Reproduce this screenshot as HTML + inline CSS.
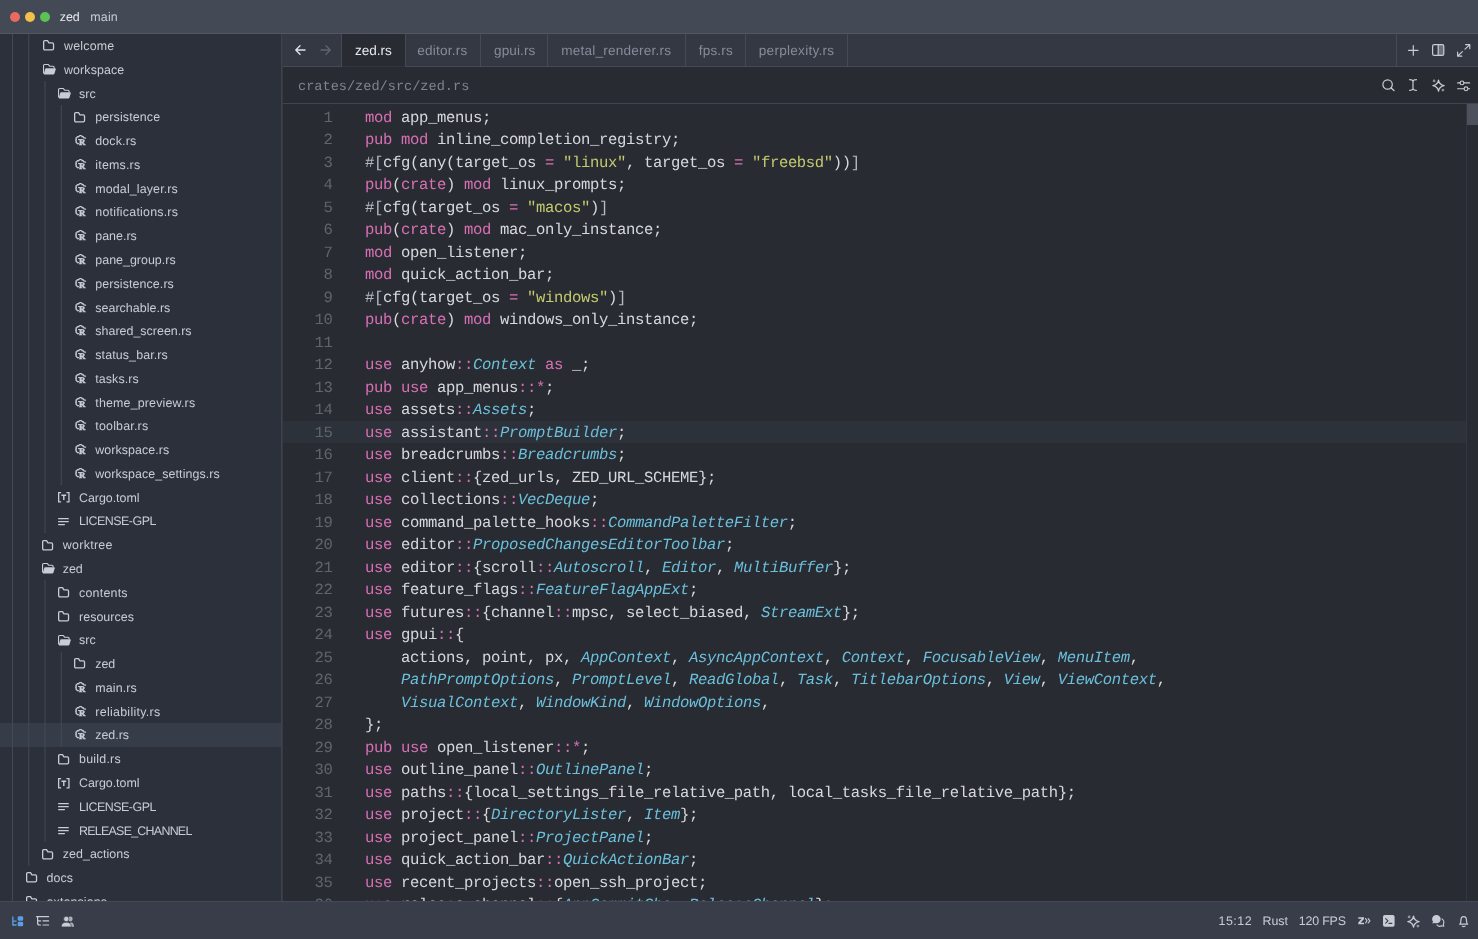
<!DOCTYPE html>
<html lang="en"><head><meta charset="utf-8"><title>zed — zed.rs</title>
<style>
*{box-sizing:border-box;margin:0;padding:0}
html,body{width:1478px;height:939px;overflow:hidden;background:#282c32}
body{position:relative;font-family:"Liberation Sans", sans-serif;font-size:12.43px;color:#c8ccd4;-webkit-font-smoothing:antialiased;text-rendering:geometricPrecision}
.tx,.cl,.ln,#crumb,.ict{will-change:opacity}
.ic{position:absolute;overflow:visible}
.tx{position:absolute;white-space:pre;color:#c8ccd4}
#title{position:absolute;left:0;top:0;width:1478px;height:34px;background:#434955;border-bottom:1px solid #505662}
.dot{position:absolute;top:11.5px;width:10px;height:10px;border-radius:50%}
#side{position:absolute;left:0;top:34px;width:283px;height:867px;background:#2b303a;border-right:1px solid #363a44;overflow:hidden}
#side:after{content:'';position:absolute;left:281px;top:0;width:1px;height:867px;background:#3d424d}
.sel{position:absolute;left:0;width:281px;background:#373c49}
.guide{position:absolute;width:1px;background:#444954}
#tabs{position:absolute;left:283px;top:34px;width:1195px;height:33px;background:#333843;border-bottom:1px solid #454a56}
.tab{position:absolute;top:0;height:32px;border-right:1px solid #454a56}
.tab.on{background:#282c32;height:33px;border-bottom:1px solid #30343c}
#tool{position:absolute;left:283px;top:67px;width:1195px;height:37px;background:#282c32;border-bottom:1px solid #3f444f}
#crumb{position:absolute;left:15px;top:11.4px;font-family:"Liberation Mono", monospace;font-size:13.6px;line-height:20px;color:#7d8391;white-space:pre}
#ed{position:absolute;left:283px;top:104px;width:1195px;height:797px;background:#282c32;overflow:hidden;font-family:"Liberation Mono", monospace;font-size:15.6px;letter-spacing:-0.3616px}
.ln{position:absolute;left:0;width:49.5px;text-align:right;color:#60646b;line-height:22.5px;height:22.5px}
.cl{position:absolute;left:82px;white-space:pre;color:#d6d8dc;line-height:22.5px;height:22.5px}
.k{color:#d96fb4}
.t{color:#6bbfdb;font-style:italic}
.s{color:#c3c96e}
.b{color:#b4b8c1}
.active{position:absolute;left:0;width:1183px;background:#2d313a}
#sbar{position:absolute;left:1183px;top:0;width:12px;height:797px;border-left:1px solid #32363e}
#thumb{position:absolute;left:0;top:0;width:12px;height:21px;background:#4c515c}
#status{position:absolute;left:0;top:901px;width:1478px;height:38px;background:#383d49;border-top:1px solid #444955}
</style></head><body>
<div id="title"><div class="dot" style="left:10px;background:#e96a60"></div><div class="dot" style="left:25px;background:#f1c14b"></div><div class="dot" style="left:40px;background:#5cc255"></div><div class="tx" style="left:59.80px;top:6.99px;font-size:12.43px;line-height:20px;color:#e6e8ec;letter-spacing:-0.120px;">zed</div><div class="tx" style="left:90.30px;top:6.99px;font-size:12.43px;line-height:20px;color:#c8ccd4;letter-spacing:0.176px;">main</div></div>
<div id="side">
<div class="sel" style="top:688.95px;height:23.77px"></div>
<div class="guide" style="left:12px;top:0.00px;height:867.00px;opacity:1.00"></div>
<div class="guide" style="left:28px;top:0.00px;height:831.56px;opacity:0.74"></div>
<div class="guide" style="left:29px;top:0.00px;height:831.56px;opacity:0.26"></div>
<div class="guide" style="left:44px;top:47.15px;height:451.63px;opacity:0.50"></div>
<div class="guide" style="left:45px;top:47.15px;height:451.63px;opacity:0.50"></div>
<div class="guide" style="left:60px;top:70.92px;height:380.32px;opacity:0.22"></div>
<div class="guide" style="left:61px;top:70.92px;height:380.32px;opacity:0.78"></div>
<div class="guide" style="left:44px;top:546.33px;height:261.47px;opacity:0.50"></div>
<div class="guide" style="left:45px;top:546.33px;height:261.47px;opacity:0.50"></div>
<div class="guide" style="left:60px;top:617.63px;height:95.08px;opacity:0.22"></div>
<div class="guide" style="left:61px;top:617.63px;height:95.08px;opacity:0.78"></div>
<svg class="ic" style="left:43.10px;top:6.45px" width="11.2" height="10.5" viewBox="0 0 11.2 10.5"><path d="M.65 1.9Q.65 .65 1.9 .65H4.5L5.9 2.9H9.3Q10.55 2.9 10.55 4.15V8.6Q10.55 9.85 9.3 9.85H1.9Q.65 9.85 .65 8.6Z" fill="none" stroke="#c8ccd4" stroke-width="1.3" stroke-linejoin="round"/></svg>
<div class="tx" style="left:64.00px;top:2.09px;font-size:12.43px;line-height:20px;letter-spacing:0.210px;">welcome</div>
<svg class="ic" style="left:42.80px;top:30.22px" width="13.2" height="10.5" viewBox="0 0 13.2 10.5"><path d="M.55 9.4V1.6Q.55 .55 1.6 .55H5.4L6.8 2.3H10.1Q11.1 2.3 11.1 3.3V4.3" fill="none" stroke="#c8ccd4" stroke-width="1.1" stroke-linejoin="round"/><path d="M3.1 4.2H12Q13.1 4.2 12.8 5.2L11.4 9.7Q11.15 10.5 10.3 10.5H1.5Q.6 10.5 .85 9.7L2.2 4.9Q2.4 4.2 3.1 4.2Z" fill="#c8ccd4"/></svg>
<div class="tx" style="left:64.00px;top:25.86px;font-size:12.43px;line-height:20px;letter-spacing:0.102px;">workspace</div>
<svg class="ic" style="left:57.80px;top:53.99px" width="13.2" height="10.5" viewBox="0 0 13.2 10.5"><path d="M.55 9.4V1.6Q.55 .55 1.6 .55H5.4L6.8 2.3H10.1Q11.1 2.3 11.1 3.3V4.3" fill="none" stroke="#c8ccd4" stroke-width="1.1" stroke-linejoin="round"/><path d="M3.1 4.2H12Q13.1 4.2 12.8 5.2L11.4 9.7Q11.15 10.5 10.3 10.5H1.5Q.6 10.5 .85 9.7L2.2 4.9Q2.4 4.2 3.1 4.2Z" fill="#c8ccd4"/></svg>
<div class="tx" style="left:79.00px;top:49.63px;font-size:12.43px;line-height:20px;letter-spacing:0.078px;">src</div>
<svg class="ic" style="left:74.40px;top:77.76px" width="11.2" height="10.5" viewBox="0 0 11.2 10.5"><path d="M.65 1.9Q.65 .65 1.9 .65H4.5L5.9 2.9H9.3Q10.55 2.9 10.55 4.15V8.6Q10.55 9.85 9.3 9.85H1.9Q.65 9.85 .65 8.6Z" fill="none" stroke="#c8ccd4" stroke-width="1.3" stroke-linejoin="round"/></svg>
<div class="tx" style="left:95.30px;top:73.40px;font-size:12.43px;line-height:20px;letter-spacing:0.124px;">persistence</div>
<svg class="ic ict" style="left:74.80px;top:101.13px" width="11" height="10.6" viewBox="0 0 11 10.6"><path d="M10.5 3.1L8.8 2.8Q8.5 1.1 7.3 1.9Q6.6 .1 5.5 .7Q4.3 .1 3.8 1.8Q2.3 1 1.9 2.6Q.3 2.9 1.4 4.2Q0 5.3 1.5 6Q.3 7.2 1.7 7.6Q2 9 3.4 8.7" fill="none" stroke="#c8ccd4" stroke-width="1.3" stroke-linecap="round" stroke-linejoin="round"/><path d="M3.1 4.55H5" fill="none" stroke="#c8ccd4" stroke-width="1.1"/><text x="3.9" y="10.35" font-weight="700" font-size="8.8" fill="#c8ccd4" stroke="#c8ccd4" stroke-width=".5" style="font-family:&quot;Liberation Serif&quot;,serif">R</text></svg>
<div class="tx" style="left:95.30px;top:97.17px;font-size:12.43px;line-height:20px;letter-spacing:0.129px;">dock.rs</div>
<svg class="ic ict" style="left:74.80px;top:124.90px" width="11" height="10.6" viewBox="0 0 11 10.6"><path d="M10.5 3.1L8.8 2.8Q8.5 1.1 7.3 1.9Q6.6 .1 5.5 .7Q4.3 .1 3.8 1.8Q2.3 1 1.9 2.6Q.3 2.9 1.4 4.2Q0 5.3 1.5 6Q.3 7.2 1.7 7.6Q2 9 3.4 8.7" fill="none" stroke="#c8ccd4" stroke-width="1.3" stroke-linecap="round" stroke-linejoin="round"/><path d="M3.1 4.55H5" fill="none" stroke="#c8ccd4" stroke-width="1.1"/><text x="3.9" y="10.35" font-weight="700" font-size="8.8" fill="#c8ccd4" stroke="#c8ccd4" stroke-width=".5" style="font-family:&quot;Liberation Serif&quot;,serif">R</text></svg>
<div class="tx" style="left:95.30px;top:120.94px;font-size:12.43px;line-height:20px;letter-spacing:0.197px;">items.rs</div>
<svg class="ic ict" style="left:74.80px;top:148.67px" width="11" height="10.6" viewBox="0 0 11 10.6"><path d="M10.5 3.1L8.8 2.8Q8.5 1.1 7.3 1.9Q6.6 .1 5.5 .7Q4.3 .1 3.8 1.8Q2.3 1 1.9 2.6Q.3 2.9 1.4 4.2Q0 5.3 1.5 6Q.3 7.2 1.7 7.6Q2 9 3.4 8.7" fill="none" stroke="#c8ccd4" stroke-width="1.3" stroke-linecap="round" stroke-linejoin="round"/><path d="M3.1 4.55H5" fill="none" stroke="#c8ccd4" stroke-width="1.1"/><text x="3.9" y="10.35" font-weight="700" font-size="8.8" fill="#c8ccd4" stroke="#c8ccd4" stroke-width=".5" style="font-family:&quot;Liberation Serif&quot;,serif">R</text></svg>
<div class="tx" style="left:95.30px;top:144.71px;font-size:12.43px;line-height:20px;letter-spacing:0.132px;">modal_layer.rs</div>
<svg class="ic ict" style="left:74.80px;top:172.44px" width="11" height="10.6" viewBox="0 0 11 10.6"><path d="M10.5 3.1L8.8 2.8Q8.5 1.1 7.3 1.9Q6.6 .1 5.5 .7Q4.3 .1 3.8 1.8Q2.3 1 1.9 2.6Q.3 2.9 1.4 4.2Q0 5.3 1.5 6Q.3 7.2 1.7 7.6Q2 9 3.4 8.7" fill="none" stroke="#c8ccd4" stroke-width="1.3" stroke-linecap="round" stroke-linejoin="round"/><path d="M3.1 4.55H5" fill="none" stroke="#c8ccd4" stroke-width="1.1"/><text x="3.9" y="10.35" font-weight="700" font-size="8.8" fill="#c8ccd4" stroke="#c8ccd4" stroke-width=".5" style="font-family:&quot;Liberation Serif&quot;,serif">R</text></svg>
<div class="tx" style="left:95.30px;top:168.48px;font-size:12.43px;line-height:20px;letter-spacing:0.216px;">notifications.rs</div>
<svg class="ic ict" style="left:74.80px;top:196.21px" width="11" height="10.6" viewBox="0 0 11 10.6"><path d="M10.5 3.1L8.8 2.8Q8.5 1.1 7.3 1.9Q6.6 .1 5.5 .7Q4.3 .1 3.8 1.8Q2.3 1 1.9 2.6Q.3 2.9 1.4 4.2Q0 5.3 1.5 6Q.3 7.2 1.7 7.6Q2 9 3.4 8.7" fill="none" stroke="#c8ccd4" stroke-width="1.3" stroke-linecap="round" stroke-linejoin="round"/><path d="M3.1 4.55H5" fill="none" stroke="#c8ccd4" stroke-width="1.1"/><text x="3.9" y="10.35" font-weight="700" font-size="8.8" fill="#c8ccd4" stroke="#c8ccd4" stroke-width=".5" style="font-family:&quot;Liberation Serif&quot;,serif">R</text></svg>
<div class="tx" style="left:95.30px;top:192.25px;font-size:12.43px;line-height:20px;letter-spacing:0.002px;">pane.rs</div>
<svg class="ic ict" style="left:74.80px;top:219.98px" width="11" height="10.6" viewBox="0 0 11 10.6"><path d="M10.5 3.1L8.8 2.8Q8.5 1.1 7.3 1.9Q6.6 .1 5.5 .7Q4.3 .1 3.8 1.8Q2.3 1 1.9 2.6Q.3 2.9 1.4 4.2Q0 5.3 1.5 6Q.3 7.2 1.7 7.6Q2 9 3.4 8.7" fill="none" stroke="#c8ccd4" stroke-width="1.3" stroke-linecap="round" stroke-linejoin="round"/><path d="M3.1 4.55H5" fill="none" stroke="#c8ccd4" stroke-width="1.1"/><text x="3.9" y="10.35" font-weight="700" font-size="8.8" fill="#c8ccd4" stroke="#c8ccd4" stroke-width=".5" style="font-family:&quot;Liberation Serif&quot;,serif">R</text></svg>
<div class="tx" style="left:95.30px;top:216.02px;font-size:12.43px;line-height:20px;letter-spacing:0.019px;">pane_group.rs</div>
<svg class="ic ict" style="left:74.80px;top:243.75px" width="11" height="10.6" viewBox="0 0 11 10.6"><path d="M10.5 3.1L8.8 2.8Q8.5 1.1 7.3 1.9Q6.6 .1 5.5 .7Q4.3 .1 3.8 1.8Q2.3 1 1.9 2.6Q.3 2.9 1.4 4.2Q0 5.3 1.5 6Q.3 7.2 1.7 7.6Q2 9 3.4 8.7" fill="none" stroke="#c8ccd4" stroke-width="1.3" stroke-linecap="round" stroke-linejoin="round"/><path d="M3.1 4.55H5" fill="none" stroke="#c8ccd4" stroke-width="1.1"/><text x="3.9" y="10.35" font-weight="700" font-size="8.8" fill="#c8ccd4" stroke="#c8ccd4" stroke-width=".5" style="font-family:&quot;Liberation Serif&quot;,serif">R</text></svg>
<div class="tx" style="left:95.30px;top:239.79px;font-size:12.43px;line-height:20px;letter-spacing:0.093px;">persistence.rs</div>
<svg class="ic ict" style="left:74.80px;top:267.52px" width="11" height="10.6" viewBox="0 0 11 10.6"><path d="M10.5 3.1L8.8 2.8Q8.5 1.1 7.3 1.9Q6.6 .1 5.5 .7Q4.3 .1 3.8 1.8Q2.3 1 1.9 2.6Q.3 2.9 1.4 4.2Q0 5.3 1.5 6Q.3 7.2 1.7 7.6Q2 9 3.4 8.7" fill="none" stroke="#c8ccd4" stroke-width="1.3" stroke-linecap="round" stroke-linejoin="round"/><path d="M3.1 4.55H5" fill="none" stroke="#c8ccd4" stroke-width="1.1"/><text x="3.9" y="10.35" font-weight="700" font-size="8.8" fill="#c8ccd4" stroke="#c8ccd4" stroke-width=".5" style="font-family:&quot;Liberation Serif&quot;,serif">R</text></svg>
<div class="tx" style="left:95.30px;top:263.56px;font-size:12.43px;line-height:20px;letter-spacing:0.038px;">searchable.rs</div>
<svg class="ic ict" style="left:74.80px;top:291.29px" width="11" height="10.6" viewBox="0 0 11 10.6"><path d="M10.5 3.1L8.8 2.8Q8.5 1.1 7.3 1.9Q6.6 .1 5.5 .7Q4.3 .1 3.8 1.8Q2.3 1 1.9 2.6Q.3 2.9 1.4 4.2Q0 5.3 1.5 6Q.3 7.2 1.7 7.6Q2 9 3.4 8.7" fill="none" stroke="#c8ccd4" stroke-width="1.3" stroke-linecap="round" stroke-linejoin="round"/><path d="M3.1 4.55H5" fill="none" stroke="#c8ccd4" stroke-width="1.1"/><text x="3.9" y="10.35" font-weight="700" font-size="8.8" fill="#c8ccd4" stroke="#c8ccd4" stroke-width=".5" style="font-family:&quot;Liberation Serif&quot;,serif">R</text></svg>
<div class="tx" style="left:95.30px;top:287.33px;font-size:12.43px;line-height:20px;letter-spacing:0.021px;">shared_screen.rs</div>
<svg class="ic ict" style="left:74.80px;top:315.06px" width="11" height="10.6" viewBox="0 0 11 10.6"><path d="M10.5 3.1L8.8 2.8Q8.5 1.1 7.3 1.9Q6.6 .1 5.5 .7Q4.3 .1 3.8 1.8Q2.3 1 1.9 2.6Q.3 2.9 1.4 4.2Q0 5.3 1.5 6Q.3 7.2 1.7 7.6Q2 9 3.4 8.7" fill="none" stroke="#c8ccd4" stroke-width="1.3" stroke-linecap="round" stroke-linejoin="round"/><path d="M3.1 4.55H5" fill="none" stroke="#c8ccd4" stroke-width="1.1"/><text x="3.9" y="10.35" font-weight="700" font-size="8.8" fill="#c8ccd4" stroke="#c8ccd4" stroke-width=".5" style="font-family:&quot;Liberation Serif&quot;,serif">R</text></svg>
<div class="tx" style="left:95.30px;top:311.10px;font-size:12.43px;line-height:20px;letter-spacing:0.113px;">status_bar.rs</div>
<svg class="ic ict" style="left:74.80px;top:338.83px" width="11" height="10.6" viewBox="0 0 11 10.6"><path d="M10.5 3.1L8.8 2.8Q8.5 1.1 7.3 1.9Q6.6 .1 5.5 .7Q4.3 .1 3.8 1.8Q2.3 1 1.9 2.6Q.3 2.9 1.4 4.2Q0 5.3 1.5 6Q.3 7.2 1.7 7.6Q2 9 3.4 8.7" fill="none" stroke="#c8ccd4" stroke-width="1.3" stroke-linecap="round" stroke-linejoin="round"/><path d="M3.1 4.55H5" fill="none" stroke="#c8ccd4" stroke-width="1.1"/><text x="3.9" y="10.35" font-weight="700" font-size="8.8" fill="#c8ccd4" stroke="#c8ccd4" stroke-width=".5" style="font-family:&quot;Liberation Serif&quot;,serif">R</text></svg>
<div class="tx" style="left:95.30px;top:334.87px;font-size:12.43px;line-height:20px;letter-spacing:0.082px;">tasks.rs</div>
<svg class="ic ict" style="left:74.80px;top:362.60px" width="11" height="10.6" viewBox="0 0 11 10.6"><path d="M10.5 3.1L8.8 2.8Q8.5 1.1 7.3 1.9Q6.6 .1 5.5 .7Q4.3 .1 3.8 1.8Q2.3 1 1.9 2.6Q.3 2.9 1.4 4.2Q0 5.3 1.5 6Q.3 7.2 1.7 7.6Q2 9 3.4 8.7" fill="none" stroke="#c8ccd4" stroke-width="1.3" stroke-linecap="round" stroke-linejoin="round"/><path d="M3.1 4.55H5" fill="none" stroke="#c8ccd4" stroke-width="1.1"/><text x="3.9" y="10.35" font-weight="700" font-size="8.8" fill="#c8ccd4" stroke="#c8ccd4" stroke-width=".5" style="font-family:&quot;Liberation Serif&quot;,serif">R</text></svg>
<div class="tx" style="left:95.30px;top:358.64px;font-size:12.43px;line-height:20px;letter-spacing:0.164px;">theme_preview.rs</div>
<svg class="ic ict" style="left:74.80px;top:386.37px" width="11" height="10.6" viewBox="0 0 11 10.6"><path d="M10.5 3.1L8.8 2.8Q8.5 1.1 7.3 1.9Q6.6 .1 5.5 .7Q4.3 .1 3.8 1.8Q2.3 1 1.9 2.6Q.3 2.9 1.4 4.2Q0 5.3 1.5 6Q.3 7.2 1.7 7.6Q2 9 3.4 8.7" fill="none" stroke="#c8ccd4" stroke-width="1.3" stroke-linecap="round" stroke-linejoin="round"/><path d="M3.1 4.55H5" fill="none" stroke="#c8ccd4" stroke-width="1.1"/><text x="3.9" y="10.35" font-weight="700" font-size="8.8" fill="#c8ccd4" stroke="#c8ccd4" stroke-width=".5" style="font-family:&quot;Liberation Serif&quot;,serif">R</text></svg>
<div class="tx" style="left:95.30px;top:382.41px;font-size:12.43px;line-height:20px;letter-spacing:0.189px;">toolbar.rs</div>
<svg class="ic ict" style="left:74.80px;top:410.14px" width="11" height="10.6" viewBox="0 0 11 10.6"><path d="M10.5 3.1L8.8 2.8Q8.5 1.1 7.3 1.9Q6.6 .1 5.5 .7Q4.3 .1 3.8 1.8Q2.3 1 1.9 2.6Q.3 2.9 1.4 4.2Q0 5.3 1.5 6Q.3 7.2 1.7 7.6Q2 9 3.4 8.7" fill="none" stroke="#c8ccd4" stroke-width="1.3" stroke-linecap="round" stroke-linejoin="round"/><path d="M3.1 4.55H5" fill="none" stroke="#c8ccd4" stroke-width="1.1"/><text x="3.9" y="10.35" font-weight="700" font-size="8.8" fill="#c8ccd4" stroke="#c8ccd4" stroke-width=".5" style="font-family:&quot;Liberation Serif&quot;,serif">R</text></svg>
<div class="tx" style="left:95.30px;top:406.18px;font-size:12.43px;line-height:20px;letter-spacing:0.072px;">workspace.rs</div>
<svg class="ic ict" style="left:74.80px;top:433.91px" width="11" height="10.6" viewBox="0 0 11 10.6"><path d="M10.5 3.1L8.8 2.8Q8.5 1.1 7.3 1.9Q6.6 .1 5.5 .7Q4.3 .1 3.8 1.8Q2.3 1 1.9 2.6Q.3 2.9 1.4 4.2Q0 5.3 1.5 6Q.3 7.2 1.7 7.6Q2 9 3.4 8.7" fill="none" stroke="#c8ccd4" stroke-width="1.3" stroke-linecap="round" stroke-linejoin="round"/><path d="M3.1 4.55H5" fill="none" stroke="#c8ccd4" stroke-width="1.1"/><text x="3.9" y="10.35" font-weight="700" font-size="8.8" fill="#c8ccd4" stroke="#c8ccd4" stroke-width=".5" style="font-family:&quot;Liberation Serif&quot;,serif">R</text></svg>
<div class="tx" style="left:95.30px;top:429.95px;font-size:12.43px;line-height:20px;letter-spacing:0.074px;">workspace_settings.rs</div>
<svg class="ic" style="left:57.80px;top:458.43px" width="11.6" height="10.6" viewBox="0 0 11.6 10.6"><path d="M3.1 .65H.65V9.95H3.1M8.5 .65H10.95V9.95H8.5" fill="none" stroke="#c8ccd4" stroke-width="1.3"/><path d="M3.4 3.2H8.2M5.8 3.2V7.9" fill="none" stroke="#c8ccd4" stroke-width="1.45"/></svg>
<div class="tx" style="left:79.00px;top:453.72px;font-size:12.43px;line-height:20px;letter-spacing:-0.027px;">Cargo.toml</div>
<svg class="ic" style="left:58.10px;top:483.90px" width="11.5" height="7.4" viewBox="0 0 11.5 7.4"><path d="M.65 .7H10.25M.65 3.65H10.25M.65 6.6H6.4" fill="none" stroke="#c8ccd4" stroke-width="1.3" stroke-linecap="round"/></svg>
<div class="tx" style="left:79.00px;top:477.49px;font-size:12.43px;line-height:20px;letter-spacing:-0.476px;">LICENSE-GPL</div>
<svg class="ic" style="left:41.90px;top:505.62px" width="11.2" height="10.5" viewBox="0 0 11.2 10.5"><path d="M.65 1.9Q.65 .65 1.9 .65H4.5L5.9 2.9H9.3Q10.55 2.9 10.55 4.15V8.6Q10.55 9.85 9.3 9.85H1.9Q.65 9.85 .65 8.6Z" fill="none" stroke="#c8ccd4" stroke-width="1.3" stroke-linejoin="round"/></svg>
<div class="tx" style="left:62.80px;top:501.26px;font-size:12.43px;line-height:20px;letter-spacing:0.285px;">worktree</div>
<svg class="ic" style="left:41.60px;top:529.39px" width="13.2" height="10.5" viewBox="0 0 13.2 10.5"><path d="M.55 9.4V1.6Q.55 .55 1.6 .55H5.4L6.8 2.3H10.1Q11.1 2.3 11.1 3.3V4.3" fill="none" stroke="#c8ccd4" stroke-width="1.1" stroke-linejoin="round"/><path d="M3.1 4.2H12Q13.1 4.2 12.8 5.2L11.4 9.7Q11.15 10.5 10.3 10.5H1.5Q.6 10.5 .85 9.7L2.2 4.9Q2.4 4.2 3.1 4.2Z" fill="#c8ccd4"/></svg>
<div class="tx" style="left:62.80px;top:525.03px;font-size:12.43px;line-height:20px;letter-spacing:-0.120px;">zed</div>
<svg class="ic" style="left:58.10px;top:553.16px" width="11.2" height="10.5" viewBox="0 0 11.2 10.5"><path d="M.65 1.9Q.65 .65 1.9 .65H4.5L5.9 2.9H9.3Q10.55 2.9 10.55 4.15V8.6Q10.55 9.85 9.3 9.85H1.9Q.65 9.85 .65 8.6Z" fill="none" stroke="#c8ccd4" stroke-width="1.3" stroke-linejoin="round"/></svg>
<div class="tx" style="left:79.00px;top:548.80px;font-size:12.43px;line-height:20px;letter-spacing:0.227px;">contents</div>
<svg class="ic" style="left:58.10px;top:576.93px" width="11.2" height="10.5" viewBox="0 0 11.2 10.5"><path d="M.65 1.9Q.65 .65 1.9 .65H4.5L5.9 2.9H9.3Q10.55 2.9 10.55 4.15V8.6Q10.55 9.85 9.3 9.85H1.9Q.65 9.85 .65 8.6Z" fill="none" stroke="#c8ccd4" stroke-width="1.3" stroke-linejoin="round"/></svg>
<div class="tx" style="left:79.00px;top:572.57px;font-size:12.43px;line-height:20px;letter-spacing:0.042px;">resources</div>
<svg class="ic" style="left:57.80px;top:600.70px" width="13.2" height="10.5" viewBox="0 0 13.2 10.5"><path d="M.55 9.4V1.6Q.55 .55 1.6 .55H5.4L6.8 2.3H10.1Q11.1 2.3 11.1 3.3V4.3" fill="none" stroke="#c8ccd4" stroke-width="1.1" stroke-linejoin="round"/><path d="M3.1 4.2H12Q13.1 4.2 12.8 5.2L11.4 9.7Q11.15 10.5 10.3 10.5H1.5Q.6 10.5 .85 9.7L2.2 4.9Q2.4 4.2 3.1 4.2Z" fill="#c8ccd4"/></svg>
<div class="tx" style="left:79.00px;top:596.34px;font-size:12.43px;line-height:20px;letter-spacing:0.078px;">src</div>
<svg class="ic" style="left:74.40px;top:624.47px" width="11.2" height="10.5" viewBox="0 0 11.2 10.5"><path d="M.65 1.9Q.65 .65 1.9 .65H4.5L5.9 2.9H9.3Q10.55 2.9 10.55 4.15V8.6Q10.55 9.85 9.3 9.85H1.9Q.65 9.85 .65 8.6Z" fill="none" stroke="#c8ccd4" stroke-width="1.3" stroke-linejoin="round"/></svg>
<div class="tx" style="left:95.30px;top:620.11px;font-size:12.43px;line-height:20px;letter-spacing:-0.120px;">zed</div>
<svg class="ic ict" style="left:74.80px;top:647.84px" width="11" height="10.6" viewBox="0 0 11 10.6"><path d="M10.5 3.1L8.8 2.8Q8.5 1.1 7.3 1.9Q6.6 .1 5.5 .7Q4.3 .1 3.8 1.8Q2.3 1 1.9 2.6Q.3 2.9 1.4 4.2Q0 5.3 1.5 6Q.3 7.2 1.7 7.6Q2 9 3.4 8.7" fill="none" stroke="#c8ccd4" stroke-width="1.3" stroke-linecap="round" stroke-linejoin="round"/><path d="M3.1 4.55H5" fill="none" stroke="#c8ccd4" stroke-width="1.1"/><text x="3.9" y="10.35" font-weight="700" font-size="8.8" fill="#c8ccd4" stroke="#c8ccd4" stroke-width=".5" style="font-family:&quot;Liberation Serif&quot;,serif">R</text></svg>
<div class="tx" style="left:95.30px;top:643.88px;font-size:12.43px;line-height:20px;letter-spacing:0.129px;">main.rs</div>
<svg class="ic ict" style="left:74.80px;top:671.61px" width="11" height="10.6" viewBox="0 0 11 10.6"><path d="M10.5 3.1L8.8 2.8Q8.5 1.1 7.3 1.9Q6.6 .1 5.5 .7Q4.3 .1 3.8 1.8Q2.3 1 1.9 2.6Q.3 2.9 1.4 4.2Q0 5.3 1.5 6Q.3 7.2 1.7 7.6Q2 9 3.4 8.7" fill="none" stroke="#c8ccd4" stroke-width="1.3" stroke-linecap="round" stroke-linejoin="round"/><path d="M3.1 4.55H5" fill="none" stroke="#c8ccd4" stroke-width="1.1"/><text x="3.9" y="10.35" font-weight="700" font-size="8.8" fill="#c8ccd4" stroke="#c8ccd4" stroke-width=".5" style="font-family:&quot;Liberation Serif&quot;,serif">R</text></svg>
<div class="tx" style="left:95.30px;top:667.65px;font-size:12.43px;line-height:20px;letter-spacing:0.278px;">reliability.rs</div>
<svg class="ic ict" style="left:74.80px;top:695.38px" width="11" height="10.6" viewBox="0 0 11 10.6"><path d="M10.5 3.1L8.8 2.8Q8.5 1.1 7.3 1.9Q6.6 .1 5.5 .7Q4.3 .1 3.8 1.8Q2.3 1 1.9 2.6Q.3 2.9 1.4 4.2Q0 5.3 1.5 6Q.3 7.2 1.7 7.6Q2 9 3.4 8.7" fill="none" stroke="#c8ccd4" stroke-width="1.3" stroke-linecap="round" stroke-linejoin="round"/><path d="M3.1 4.55H5" fill="none" stroke="#c8ccd4" stroke-width="1.1"/><text x="3.9" y="10.35" font-weight="700" font-size="8.8" fill="#c8ccd4" stroke="#c8ccd4" stroke-width=".5" style="font-family:&quot;Liberation Serif&quot;,serif">R</text></svg>
<div class="tx" style="left:95.30px;top:691.42px;font-size:12.43px;line-height:20px;letter-spacing:-0.029px;">zed.rs</div>
<svg class="ic" style="left:58.10px;top:719.55px" width="11.2" height="10.5" viewBox="0 0 11.2 10.5"><path d="M.65 1.9Q.65 .65 1.9 .65H4.5L5.9 2.9H9.3Q10.55 2.9 10.55 4.15V8.6Q10.55 9.85 9.3 9.85H1.9Q.65 9.85 .65 8.6Z" fill="none" stroke="#c8ccd4" stroke-width="1.3" stroke-linejoin="round"/></svg>
<div class="tx" style="left:79.00px;top:715.19px;font-size:12.43px;line-height:20px;letter-spacing:0.236px;">build.rs</div>
<svg class="ic" style="left:57.80px;top:743.67px" width="11.6" height="10.6" viewBox="0 0 11.6 10.6"><path d="M3.1 .65H.65V9.95H3.1M8.5 .65H10.95V9.95H8.5" fill="none" stroke="#c8ccd4" stroke-width="1.3"/><path d="M3.4 3.2H8.2M5.8 3.2V7.9" fill="none" stroke="#c8ccd4" stroke-width="1.45"/></svg>
<div class="tx" style="left:79.00px;top:738.96px;font-size:12.43px;line-height:20px;letter-spacing:-0.027px;">Cargo.toml</div>
<svg class="ic" style="left:58.10px;top:769.14px" width="11.5" height="7.4" viewBox="0 0 11.5 7.4"><path d="M.65 .7H10.25M.65 3.65H10.25M.65 6.6H6.4" fill="none" stroke="#c8ccd4" stroke-width="1.3" stroke-linecap="round"/></svg>
<div class="tx" style="left:79.00px;top:762.73px;font-size:12.43px;line-height:20px;letter-spacing:-0.476px;">LICENSE-GPL</div>
<svg class="ic" style="left:58.10px;top:792.91px" width="11.5" height="7.4" viewBox="0 0 11.5 7.4"><path d="M.65 .7H10.25M.65 3.65H10.25M.65 6.6H6.4" fill="none" stroke="#c8ccd4" stroke-width="1.3" stroke-linecap="round"/></svg>
<div class="tx" style="left:79.00px;top:786.50px;font-size:12.43px;line-height:20px;letter-spacing:-0.732px;">RELEASE_CHANNEL</div>
<svg class="ic" style="left:41.90px;top:814.63px" width="11.2" height="10.5" viewBox="0 0 11.2 10.5"><path d="M.65 1.9Q.65 .65 1.9 .65H4.5L5.9 2.9H9.3Q10.55 2.9 10.55 4.15V8.6Q10.55 9.85 9.3 9.85H1.9Q.65 9.85 .65 8.6Z" fill="none" stroke="#c8ccd4" stroke-width="1.3" stroke-linejoin="round"/></svg>
<div class="tx" style="left:62.80px;top:810.27px;font-size:12.43px;line-height:20px;letter-spacing:0.038px;">zed_actions</div>
<svg class="ic" style="left:25.70px;top:838.40px" width="11.2" height="10.5" viewBox="0 0 11.2 10.5"><path d="M.65 1.9Q.65 .65 1.9 .65H4.5L5.9 2.9H9.3Q10.55 2.9 10.55 4.15V8.6Q10.55 9.85 9.3 9.85H1.9Q.65 9.85 .65 8.6Z" fill="none" stroke="#c8ccd4" stroke-width="1.3" stroke-linejoin="round"/></svg>
<div class="tx" style="left:46.60px;top:834.04px;font-size:12.43px;line-height:20px;letter-spacing:0.055px;">docs</div>
<svg class="ic" style="left:25.70px;top:862.17px" width="11.2" height="10.5" viewBox="0 0 11.2 10.5"><path d="M.65 1.9Q.65 .65 1.9 .65H4.5L5.9 2.9H9.3Q10.55 2.9 10.55 4.15V8.6Q10.55 9.85 9.3 9.85H1.9Q.65 9.85 .65 8.6Z" fill="none" stroke="#c8ccd4" stroke-width="1.3" stroke-linejoin="round"/></svg>
<div class="tx" style="left:46.60px;top:857.81px;font-size:12.43px;line-height:20px;letter-spacing:0.098px;">extensions</div>
</div>
<div id="tabs">
<div class="tab" style="left:0;width:59px"></div>
<svg class="ic" style="left:12.00px;top:11.30px" width="11" height="10" viewBox="0 0 11 10"><path d="M5 .8L.8 5L5 9.2M1 5H10" fill="none" stroke="#e0e3e8" stroke-width="1.35" stroke-linecap="round" stroke-linejoin="round" /></svg>
<svg class="ic" style="left:36.60px;top:11.30px" width="11" height="10" viewBox="0 0 11 10"><path d="M6 .8L10.2 5L6 9.2M10 5H1" fill="none" stroke="#5d6370" stroke-width="1.35" stroke-linecap="round" stroke-linejoin="round" /></svg>
<div class="tab on" style="left:59px;width:64px"></div>
<div class="tx" style="left:71.90px;top:6.79px;font-size:13.59px;line-height:20px;color:#e6e8ec;letter-spacing:-0.031px;">zed.rs</div>
<div class="tab" style="left:123px;width:75px"></div>
<div class="tx" style="left:134.20px;top:6.79px;font-size:13.59px;line-height:20px;color:#858b98;letter-spacing:0.214px;">editor.rs</div>
<div class="tab" style="left:198px;width:67px"></div>
<div class="tx" style="left:211.00px;top:6.79px;font-size:13.59px;line-height:20px;color:#858b98;letter-spacing:0.098px;">gpui.rs</div>
<div class="tab" style="left:265px;width:138px"></div>
<div class="tx" style="left:278.30px;top:6.79px;font-size:13.59px;line-height:20px;color:#858b98;letter-spacing:0.203px;">metal_renderer.rs</div>
<div class="tab" style="left:403px;width:60px"></div>
<div class="tx" style="left:415.80px;top:6.79px;font-size:13.59px;line-height:20px;color:#858b98;letter-spacing:0.151px;">fps.rs</div>
<div class="tab" style="left:463px;width:102px"></div>
<div class="tx" style="left:475.80px;top:6.79px;font-size:13.59px;line-height:20px;color:#858b98;letter-spacing:0.258px;">perplexity.rs</div>
<div class="tab" style="left:1113px;width:1px;border-right:none;border-left:1px solid #454a56"></div>
<svg class="ic" style="left:1125.10px;top:11.10px" width="10.6" height="10.8" viewBox="0 0 10.6 10.8"><path d="M5.3 .6V10.2M.6 5.4H10" fill="none" stroke="#c8ccd4" stroke-width="1.2" stroke-linecap="round" stroke-linejoin="round" /></svg>
<svg class="ic" style="left:1149.20px;top:10.20px" width="12.4" height="12" viewBox="0 0 12.4 12"><rect x="6.2" y=".6" width="5.6" height="10.8" fill="#c8ccd4" opacity=".38"/><rect x=".6" y=".6" width="11.2" height="10.8" rx="1.6" fill="none" stroke="#c8ccd4" stroke-width="1.2"/><path d="M6.2 .6V11.4" fill="none" stroke="#c8ccd4" stroke-width="1.2" stroke-linecap="round" stroke-linejoin="round" /></svg>
<svg class="ic" style="left:1173.90px;top:10.00px" width="13.4" height="12.8" viewBox="0 0 13.4 12.8"><path d="M8.6 .6H12.8V4.8M12.6 .8L8 5.2M4.8 12.2H.6V8M.8 12L5.4 7.6" fill="none" stroke="#c8ccd4" stroke-width="1.15" stroke-linecap="round" stroke-linejoin="round" /></svg>
</div>
<div id="tool"><div id="crumb">crates/zed/src/zed.rs</div>
<svg class="ic" style="left:1099.10px;top:12.10px" width="12.8" height="12" viewBox="0 0 12.8 12"><circle cx="5.6" cy="5.5" r="4.7" fill="none" stroke="#c8ccd4" stroke-width="1.2"/><path d="M9.1 9L12 11.5" fill="none" stroke="#c8ccd4" stroke-width="1.3" stroke-linecap="round" stroke-linejoin="round" /></svg>
<svg class="ic" style="left:1126.40px;top:12.40px" width="8" height="12" viewBox="0 0 8 12"><path d="M.6 .7C2.6 .7 3.7 1.2 4 2.4C4.3 1.2 5.4 .7 7.4 .7M4 2.2V9.8M.6 11.3C2.6 11.3 3.7 10.8 4 9.6C4.3 10.8 5.4 11.3 7.4 11.3" fill="none" stroke="#c8ccd4" stroke-width="1.2" stroke-linecap="round" stroke-linejoin="round" /></svg>
<svg class="ic" style="left:1149.00px;top:12.00px" width="13" height="13" viewBox="0 0 13 13"><path d="M6.5 1.1C7.1 4.6 8.5 6 12.1 6.6C8.5 7.2 7.1 8.6 6.5 12.2C5.9 8.6 4.5 7.2 .9 6.6C4.5 6 5.9 4.6 6.5 1.1Z" fill="none" stroke="#c8ccd4" stroke-width="1.3" stroke-linecap="round" stroke-linejoin="round" /><circle cx="2.1" cy="1.9" r="1.4" fill="#c8ccd4" opacity=".62"/><circle cx="10.9" cy="11.1" r="1.4" fill="#c8ccd4" opacity=".62"/></svg>
<svg class="ic" style="left:1173.90px;top:12.60px" width="13.2" height="12" viewBox="0 0 13.2 12"><path d="M.6 2.9H3M7 2.9H12.6M.6 8.8H7M11 8.8H12.6" fill="none" stroke="#c8ccd4" stroke-width="1.15" stroke-linecap="round" stroke-linejoin="round" /><circle cx="5" cy="2.9" r="1.9" fill="none" stroke="#c8ccd4" stroke-width="1.1"/><circle cx="9" cy="8.8" r="1.9" fill="none" stroke="#c8ccd4" stroke-width="1.1"/></svg>
</div>
<div id="ed">
<div class="active" style="top:316.50px;height:22.5px"></div>
<div class="ln" style="top:2.70px">1</div><div class="cl" style="top:2.70px"><span class="k">mod</span> app_menus;</div>
<div class="ln" style="top:25.20px">2</div><div class="cl" style="top:25.20px"><span class="k">pub</span> <span class="k">mod</span> inline_completion_registry;</div>
<div class="ln" style="top:47.70px">3</div><div class="cl" style="top:47.70px"><span class="b">#[</span>cfg(any(target_os <span class="k">=</span> <span class="s">&quot;linux&quot;</span>, target_os <span class="k">=</span> <span class="s">&quot;freebsd&quot;</span>))<span class="b">]</span></div>
<div class="ln" style="top:70.20px">4</div><div class="cl" style="top:70.20px"><span class="k">pub</span>(<span class="k">crate</span>) <span class="k">mod</span> linux_prompts;</div>
<div class="ln" style="top:92.70px">5</div><div class="cl" style="top:92.70px"><span class="b">#[</span>cfg(target_os <span class="k">=</span> <span class="s">&quot;macos&quot;</span>)<span class="b">]</span></div>
<div class="ln" style="top:115.20px">6</div><div class="cl" style="top:115.20px"><span class="k">pub</span>(<span class="k">crate</span>) <span class="k">mod</span> mac_only_instance;</div>
<div class="ln" style="top:137.70px">7</div><div class="cl" style="top:137.70px"><span class="k">mod</span> open_listener;</div>
<div class="ln" style="top:160.20px">8</div><div class="cl" style="top:160.20px"><span class="k">mod</span> quick_action_bar;</div>
<div class="ln" style="top:182.70px">9</div><div class="cl" style="top:182.70px"><span class="b">#[</span>cfg(target_os <span class="k">=</span> <span class="s">&quot;windows&quot;</span>)<span class="b">]</span></div>
<div class="ln" style="top:205.20px">10</div><div class="cl" style="top:205.20px"><span class="k">pub</span>(<span class="k">crate</span>) <span class="k">mod</span> windows_only_instance;</div>
<div class="ln" style="top:227.70px">11</div><div class="cl" style="top:227.70px"></div>
<div class="ln" style="top:250.20px">12</div><div class="cl" style="top:250.20px"><span class="k">use</span> anyhow<span class="k">::</span><span class="t">Context</span> <span class="k">as</span> _;</div>
<div class="ln" style="top:272.70px">13</div><div class="cl" style="top:272.70px"><span class="k">pub</span> <span class="k">use</span> app_menus<span class="k">::</span><span class="k">*</span>;</div>
<div class="ln" style="top:295.20px">14</div><div class="cl" style="top:295.20px"><span class="k">use</span> assets<span class="k">::</span><span class="t">Assets</span>;</div>
<div class="ln" style="top:317.70px">15</div><div class="cl" style="top:317.70px"><span class="k">use</span> assistant<span class="k">::</span><span class="t">PromptBuilder</span>;</div>
<div class="ln" style="top:340.20px">16</div><div class="cl" style="top:340.20px"><span class="k">use</span> breadcrumbs<span class="k">::</span><span class="t">Breadcrumbs</span>;</div>
<div class="ln" style="top:362.70px">17</div><div class="cl" style="top:362.70px"><span class="k">use</span> client<span class="k">::</span>{zed_urls, ZED_URL_SCHEME};</div>
<div class="ln" style="top:385.20px">18</div><div class="cl" style="top:385.20px"><span class="k">use</span> collections<span class="k">::</span><span class="t">VecDeque</span>;</div>
<div class="ln" style="top:407.70px">19</div><div class="cl" style="top:407.70px"><span class="k">use</span> command_palette_hooks<span class="k">::</span><span class="t">CommandPaletteFilter</span>;</div>
<div class="ln" style="top:430.20px">20</div><div class="cl" style="top:430.20px"><span class="k">use</span> editor<span class="k">::</span><span class="t">ProposedChangesEditorToolbar</span>;</div>
<div class="ln" style="top:452.70px">21</div><div class="cl" style="top:452.70px"><span class="k">use</span> editor<span class="k">::</span>{scroll<span class="k">::</span><span class="t">Autoscroll</span>, <span class="t">Editor</span>, <span class="t">MultiBuffer</span>};</div>
<div class="ln" style="top:475.20px">22</div><div class="cl" style="top:475.20px"><span class="k">use</span> feature_flags<span class="k">::</span><span class="t">FeatureFlagAppExt</span>;</div>
<div class="ln" style="top:497.70px">23</div><div class="cl" style="top:497.70px"><span class="k">use</span> futures<span class="k">::</span>{channel<span class="k">::</span>mpsc, select_biased, <span class="t">StreamExt</span>};</div>
<div class="ln" style="top:520.20px">24</div><div class="cl" style="top:520.20px"><span class="k">use</span> gpui<span class="k">::</span>{</div>
<div class="ln" style="top:542.70px">25</div><div class="cl" style="top:542.70px">    actions, point, px, <span class="t">AppContext</span>, <span class="t">AsyncAppContext</span>, <span class="t">Context</span>, <span class="t">FocusableView</span>, <span class="t">MenuItem</span>,</div>
<div class="ln" style="top:565.20px">26</div><div class="cl" style="top:565.20px">    <span class="t">PathPromptOptions</span>, <span class="t">PromptLevel</span>, <span class="t">ReadGlobal</span>, <span class="t">Task</span>, <span class="t">TitlebarOptions</span>, <span class="t">View</span>, <span class="t">ViewContext</span>,</div>
<div class="ln" style="top:587.70px">27</div><div class="cl" style="top:587.70px">    <span class="t">VisualContext</span>, <span class="t">WindowKind</span>, <span class="t">WindowOptions</span>,</div>
<div class="ln" style="top:610.20px">28</div><div class="cl" style="top:610.20px">};</div>
<div class="ln" style="top:632.70px">29</div><div class="cl" style="top:632.70px"><span class="k">pub</span> <span class="k">use</span> open_listener<span class="k">::</span><span class="k">*</span>;</div>
<div class="ln" style="top:655.20px">30</div><div class="cl" style="top:655.20px"><span class="k">use</span> outline_panel<span class="k">::</span><span class="t">OutlinePanel</span>;</div>
<div class="ln" style="top:677.70px">31</div><div class="cl" style="top:677.70px"><span class="k">use</span> paths<span class="k">::</span>{local_settings_file_relative_path, local_tasks_file_relative_path};</div>
<div class="ln" style="top:700.20px">32</div><div class="cl" style="top:700.20px"><span class="k">use</span> project<span class="k">::</span>{<span class="t">DirectoryLister</span>, <span class="t">Item</span>};</div>
<div class="ln" style="top:722.70px">33</div><div class="cl" style="top:722.70px"><span class="k">use</span> project_panel<span class="k">::</span><span class="t">ProjectPanel</span>;</div>
<div class="ln" style="top:745.20px">34</div><div class="cl" style="top:745.20px"><span class="k">use</span> quick_action_bar<span class="k">::</span><span class="t">QuickActionBar</span>;</div>
<div class="ln" style="top:767.70px">35</div><div class="cl" style="top:767.70px"><span class="k">use</span> recent_projects<span class="k">::</span>open_ssh_project;</div>
<div class="ln" style="top:790.20px">36</div><div class="cl" style="top:790.20px"><span class="k">use</span> release_channel<span class="k">::</span>{<span class="t">AppCommitSha</span>, <span class="t">ReleaseChannel</span>};</div>
<div id="sbar"><div id="thumb"></div></div></div>
<div id="status">
<svg class="ic" style="left:12.00px;top:13.70px" width="11.4" height="10.6" viewBox="0 0 11.4 10.6"><path d="M.2 .2L1.5 .8V4.4H4.6V5.8H1.5V8.3H4.6V9.7H.2Z" fill="#5b9ee5"/><rect x="5.7" y=".3" width="5.5" height="4.5" rx="1.3" fill="#5b9ee5"/><rect x="5.7" y="5.8" width="5.5" height="4.5" rx="1.3" fill="#5b9ee5"/></svg>
<svg class="ic" style="left:36.00px;top:14.30px" width="13.2" height="9.8" viewBox="0 0 13.2 9.8"><path d="M.6 .7H12.6M1.6 .7V7Q1.6 9 3.6 9H4.6M1.6 4.9H4.6M7 4.9H12.6M7 9H12.6" fill="none" stroke="#c8ccd4" stroke-width="1.2" stroke-linecap="round" stroke-linejoin="round" /></svg>
<svg class="ic" style="left:61.00px;top:13.70px" width="13.2" height="11" viewBox="0 0 13.2 11"><circle cx="9.3" cy="3" r="2.4" fill="#c8ccd4" opacity=".8"/><path d="M7.6 10.8C7.6 8 8.6 6.4 10.2 6.4C12 6.4 13 8 13 10.8Z" fill="#c8ccd4" opacity=".8"/><circle cx="5.3" cy="3" r="2.7" fill="#c8ccd4" stroke="#383d49" stroke-width=".7"/><path d="M.2 10.9C.2 7.8 2 6.2 5.3 6.2C8.6 6.2 10.4 7.8 10.4 10.9Z" fill="#c8ccd4" stroke="#383d49" stroke-width=".7"/></svg>
<div class="tx" style="left:1218.60px;top:9.29px;font-size:12.43px;line-height:20px;letter-spacing:0.472px;">15:12</div>
<div class="tx" style="left:1262.60px;top:9.29px;font-size:12.43px;line-height:20px;letter-spacing:-0.055px;">Rust</div>
<div class="tx" style="left:1298.80px;top:9.29px;font-size:12.43px;line-height:20px;letter-spacing:-0.194px;">120 FPS</div>
<svg class="ic" style="left:1357.60px;top:15.30px" width="12.8" height="7.6" viewBox="0 0 12.8 7.6"><path d="M.3 .3H6V1.9L2.6 5.7H6V7.2H.3V5.6L3.7 1.8H.3Z" fill="#c8ccd4"/><path d="M7.6 1.6L9 3.8L7.6 6M10.2 1.6L11.9 3.8L10.2 6" fill="none" stroke="#c8ccd4" stroke-width="1.15" stroke-linecap="round" stroke-linejoin="round" /></svg>
<svg class="ic" style="left:1382.80px;top:13.20px" width="11.6" height="11.8" viewBox="0 0 11.6 11.8"><rect x="0" y="0" width="11.6" height="11.8" rx="1.8" fill="#c8ccd4"/><path d="M2.7 3.6L5 5.9L2.7 8.2M6 8.4H8.8" fill="none" stroke="#383d49" stroke-width="1.15" stroke-linecap="round" stroke-linejoin="round" /></svg>
<svg class="ic" style="left:1407.00px;top:12.80px" width="13" height="13" viewBox="0 0 13 13"><path d="M6.5 1.1C7.1 4.6 8.5 6 12.1 6.6C8.5 7.2 7.1 8.6 6.5 12.2C5.9 8.6 4.5 7.2 .9 6.6C4.5 6 5.9 4.6 6.5 1.1Z" fill="none" stroke="#c8ccd4" stroke-width="1.3" stroke-linecap="round" stroke-linejoin="round" /><circle cx="2.1" cy="1.9" r="1.4" fill="#c8ccd4" opacity=".62"/><circle cx="10.9" cy="11.1" r="1.4" fill="#c8ccd4" opacity=".62"/></svg>
<svg class="ic" style="left:1432.40px;top:13.10px" width="12.4" height="11.8" viewBox="0 0 12.4 11.8"><path d="M10 3.9A3.9 3.9 0 0 1 11.3 9.3L11.8 11.3L9.7 10.8A3.9 3.9 0 0 1 5 9.9" fill="none" stroke="#c8ccd4" stroke-width="1.1" stroke-linecap="round" stroke-linejoin="round" /><path d="M4.4 .1C6.8 .1 8.7 1.9 8.7 4.2C8.7 6.5 6.8 8.3 4.4 8.3C3.7 8.3 3.1 8.2 2.5 7.9L.3 8.6L1 6.6C.5 5.9 .1 5.1 .1 4.2C.1 1.9 2 .1 4.4 .1Z" fill="#c8ccd4"/></svg>
<svg class="ic" style="left:1458.80px;top:13.60px" width="9.4" height="11.2" viewBox="0 0 9.4 11.2"><path d="M.7 8.2C1.7 7.4 1.9 6.4 1.9 4.4C1.9 2.2 3 .7 4.7 .7C6.4 .7 7.5 2.2 7.5 4.4C7.5 6.4 7.7 7.4 8.7 8.2Z" fill="none" stroke="#c8ccd4" stroke-width="1.2" stroke-linecap="round" stroke-linejoin="round" /><path d="M3.3 10.1C4.1 10.7 5.3 10.7 6.1 10.1" fill="none" stroke="#c8ccd4" stroke-width="1.1" stroke-linecap="round" stroke-linejoin="round" /></svg>
</div>
</body></html>
